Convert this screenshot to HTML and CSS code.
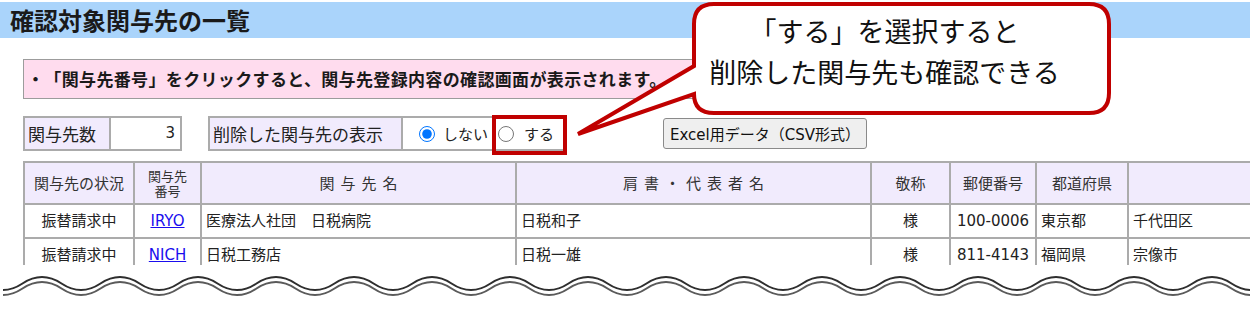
FILE: index.html
```html
<!DOCTYPE html>
<html lang="ja">
<head>
<meta charset="utf-8">
<title>確認対象関与先の一覧</title>
<link rel="stylesheet" href="styles.css">
</head>
<body>
<div class="page">
  <h1 class="title">確認対象関与先の一覧</h1>
  <div class="notice">・「関与先番号」をクリックすると、関与先登録内容の確認画面が表示されます。</div>
  <div class="controls">
    <div class="field count">
      <div class="field-label">関与先数</div>
      <div class="field-value num">3</div>
    </div>
    <div class="field deleted">
      <div class="field-label">削除した関与先の表示</div>
      <div class="field-value radios">
        <label class="radio"><input type="radio" name="del" checked><span>しない</span></label>
        <label class="radio"><input type="radio" name="del"><span>する</span></label>
      </div>
    </div>
    <button class="csv-btn" type="button">Excel用データ（CSV形式）</button>
  </div>
  <div class="table-wrap">
    <table class="list">
      <colgroup>
        <col class="w1"><col class="w2"><col class="w3"><col class="w4"><col class="w5"><col class="w6"><col class="w7"><col class="w8">
      </colgroup>
      <thead>
        <tr class="head">
          <th>関与先の状況</th>
          <th class="two"><span class="ln">関与先</span><span class="ln">番号</span></th>
          <th class="spaced">関与先名</th>
          <th class="spaced">肩書・代表者名</th>
          <th>敬称</th>
          <th>郵便番号</th>
          <th>都道府県</th>
          <th></th>
        </tr>
      </thead>
      <tbody>
        <tr>
          <td class="c">振替請求中</td>
          <td class="c"><a href="#">IRYO</a></td>
          <td>医療法人社団　日税病院</td>
          <td>日税和子</td>
          <td class="c">様</td>
          <td class="c">100-0006</td>
          <td>東京都</td>
          <td>千代田区</td>
        </tr>
        <tr>
          <td class="c">振替請求中</td>
          <td class="c"><a href="#">NICH</a></td>
          <td>日税工務店</td>
          <td>日税一雄</td>
          <td class="c">様</td>
          <td class="c">811-4143</td>
          <td>福岡県</td>
          <td>宗像市</td>
        </tr>
      </tbody>
    </table>
  </div>
  <svg class="wave" width="1247" height="32" viewBox="0 0 1247 32">
    <path class="wave-top" d="M -19.5 15.5 q 19.5 13 39 0 t 39 0 t 39 0 t 39 0 t 39 0 t 39 0 t 39 0 t 39 0 t 39 0 t 39 0 t 39 0 t 39 0 t 39 0 t 39 0 t 39 0 t 39 0 t 39 0 t 39 0 t 39 0 t 39 0 t 39 0 t 39 0 t 39 0 t 39 0 t 39 0 t 39 0 t 39 0 t 39 0 t 39 0 t 39 0 t 39 0 t 39 0 t 39 0"/>
    <path class="wave-bottom" d="M -19.5 20.5 q 19.5 13 39 0 t 39 0 t 39 0 t 39 0 t 39 0 t 39 0 t 39 0 t 39 0 t 39 0 t 39 0 t 39 0 t 39 0 t 39 0 t 39 0 t 39 0 t 39 0 t 39 0 t 39 0 t 39 0 t 39 0 t 39 0 t 39 0 t 39 0 t 39 0 t 39 0 t 39 0 t 39 0 t 39 0 t 39 0 t 39 0 t 39 0 t 39 0 t 39 0"/>
  </svg>

  <div class="highlight"></div>
  <svg class="callout-shape" width="1250" height="160" viewBox="0 0 1250 160">
    <path d="M 714 2 H 1089 Q 1109 2 1109 22 V 91 Q 1109 111 1089 111 H 714 Q 694 111 694 92 L 578 132 L 694 64 V 22 Q 694 2 714 2 Z"/>
  </svg>
  <div class="callout-text">「する」を選択すると<br>削除した関与先も確認できる</div>
</div>
</body>
</html>
```
FILE: styles.css
```css
html, body {
  margin: 0;
  padding: 0;
  background: #fff;
}
body {
  width: 1250px;
  height: 313px;
  overflow: hidden;
  font-family: "Noto Sans CJK JP", "Noto Sans", sans-serif;
  color: #222;
  text-spacing-trim: space-all;
}
.page {
  position: relative;
  height: 313px;
}
.title {
  margin: 2px 0 0;
  height: 36px;
  line-height: 36px;
  padding-left: 10px;
  background: #aad4fb;
  font-size: 24px;
  font-weight: bold;
  color: #1a1a1a;
}
.notice {
  margin: 21px 0 0 23px;
  width: 740px;
  height: 38px;
  line-height: 38px;
  border: 1px solid #9c9c9c;
  background: #ffdcee;
  padding-left: 3px;
  font-size: 17px;
  letter-spacing: 0.35px;
  font-weight: bold;
  color: #1a1a1a;
  white-space: nowrap;
}
.controls {
  display: flex;
  align-items: flex-start;
  margin: 17px 0 0 23px;
}
.field {
  display: flex;
  box-sizing: border-box;
  height: 35px;
  border: 2px solid #ababab;
  font-size: 17px;
  line-height: 31px;
}
.field-label {
  box-sizing: border-box;
  background: #f1ebfd;
  border-right: 2px solid #ababab;
  padding-left: 3px;
  color: #222;
}
.field-value {
  flex: 1;
  background: #fff;
}
.count {
  width: 159px;
}
.count .field-label {
  width: 86px;
}
.num {
  text-align: right;
  padding-right: 5px;
  font-family: "DejaVu Sans", "Noto Sans CJK JP", sans-serif;
  font-size: 15px;
}
.deleted {
  width: 358px;
  margin-left: 26px;
}
.deleted .field-label {
  width: 193px;
}
.radios {
  display: flex;
  align-items: center;
  padding-left: 16px;
  font-size: 15px;
}
.radio {
  display: flex;
  align-items: center;
  margin-right: 10px;
}
.radio input {
  width: 16px;
  height: 16px;
  margin: 0 8px 0 0;
  accent-color: #0075ff;
}
.radio + .radio input {
  margin-right: 10px;
}
.csv-btn {
  box-sizing: border-box;
  margin: 2px 0 0 97px;
  width: 204px;
  height: 31px;
  padding: 0;
  background: #efefef;
  border: 1px solid #8a8a8a;
  border-radius: 3px;
  font-family: "DejaVu Sans", "Noto Sans CJK JP", sans-serif;
  font-size: 15px;
  color: #111;
  text-spacing-trim: space-all;
}
.table-wrap {
  margin-top: 10px;
  height: 104px;
  overflow: hidden;
}
.list {
  margin-left: 23px;
  table-layout: fixed;
  width: 1350px;
  border-collapse: separate;
  border-spacing: 0;
  border-left: 2px solid #ababab;
  border-top: 2px solid #ababab;
  font-size: 15px;
}
.w1 { width: 110px; }
.w2 { width: 67px; }
.w3 { width: 315px; }
.w4 { width: 355px; }
.w5 { width: 79px; }
.w6 { width: 86px; }
.w7 { width: 92px; }
.w8 { width: 244px; }
.list th, .list td {
  border-right: 2px solid #ababab;
  border-bottom: 2px solid #ababab;
  padding: 0 0 0 4px;
  white-space: nowrap;
  overflow: hidden;
}
.list th {
  background: #f1ebfd;
  font-weight: normal;
  color: #333;
  height: 40px;
  line-height: 20px;
  padding: 0;
  text-align: center;
}
.list th.two {
  font-size: 13px;
  line-height: 15px;
}
.list th.two .ln {
  display: block;
}
.list th.spaced {
  letter-spacing: 6px;
  padding-left: 6px;
}
.list td {
  height: 32px;
  line-height: 20px;
  color: #222;
  font-family: "DejaVu Sans", "Noto Sans CJK JP", sans-serif;
}
.list td.c {
  text-align: center;
  padding-left: 0;
}
.list a {
  color: #1a0dee;
  text-decoration: underline;
}
.wave {
  display: block;
  margin: 3px 0 0 3px;
}
.wave path {
  fill: none;
  stroke-width: 2;
}
.wave-top {
  stroke: #2e2e2e;
}
.wave-bottom {
  stroke: #5a5a5a;
}
.highlight {
  position: absolute;
  left: 492px;
  top: 113px;
  width: 75px;
  height: 40px;
  box-sizing: border-box;
  border: 4px solid #c00000;
}
.callout-shape {
  position: absolute;
  left: 0;
  top: 0;
  pointer-events: none;
}
.callout-shape path {
  fill: #fff;
  stroke: #c00000;
  stroke-width: 4;
  stroke-linejoin: miter;
}
.callout-text {
  position: absolute;
  left: 679px;
  top: 8px;
  width: 411px;
  text-align: center;
  font-size: 27px;
  line-height: 41px;
  color: #111;
}
```
